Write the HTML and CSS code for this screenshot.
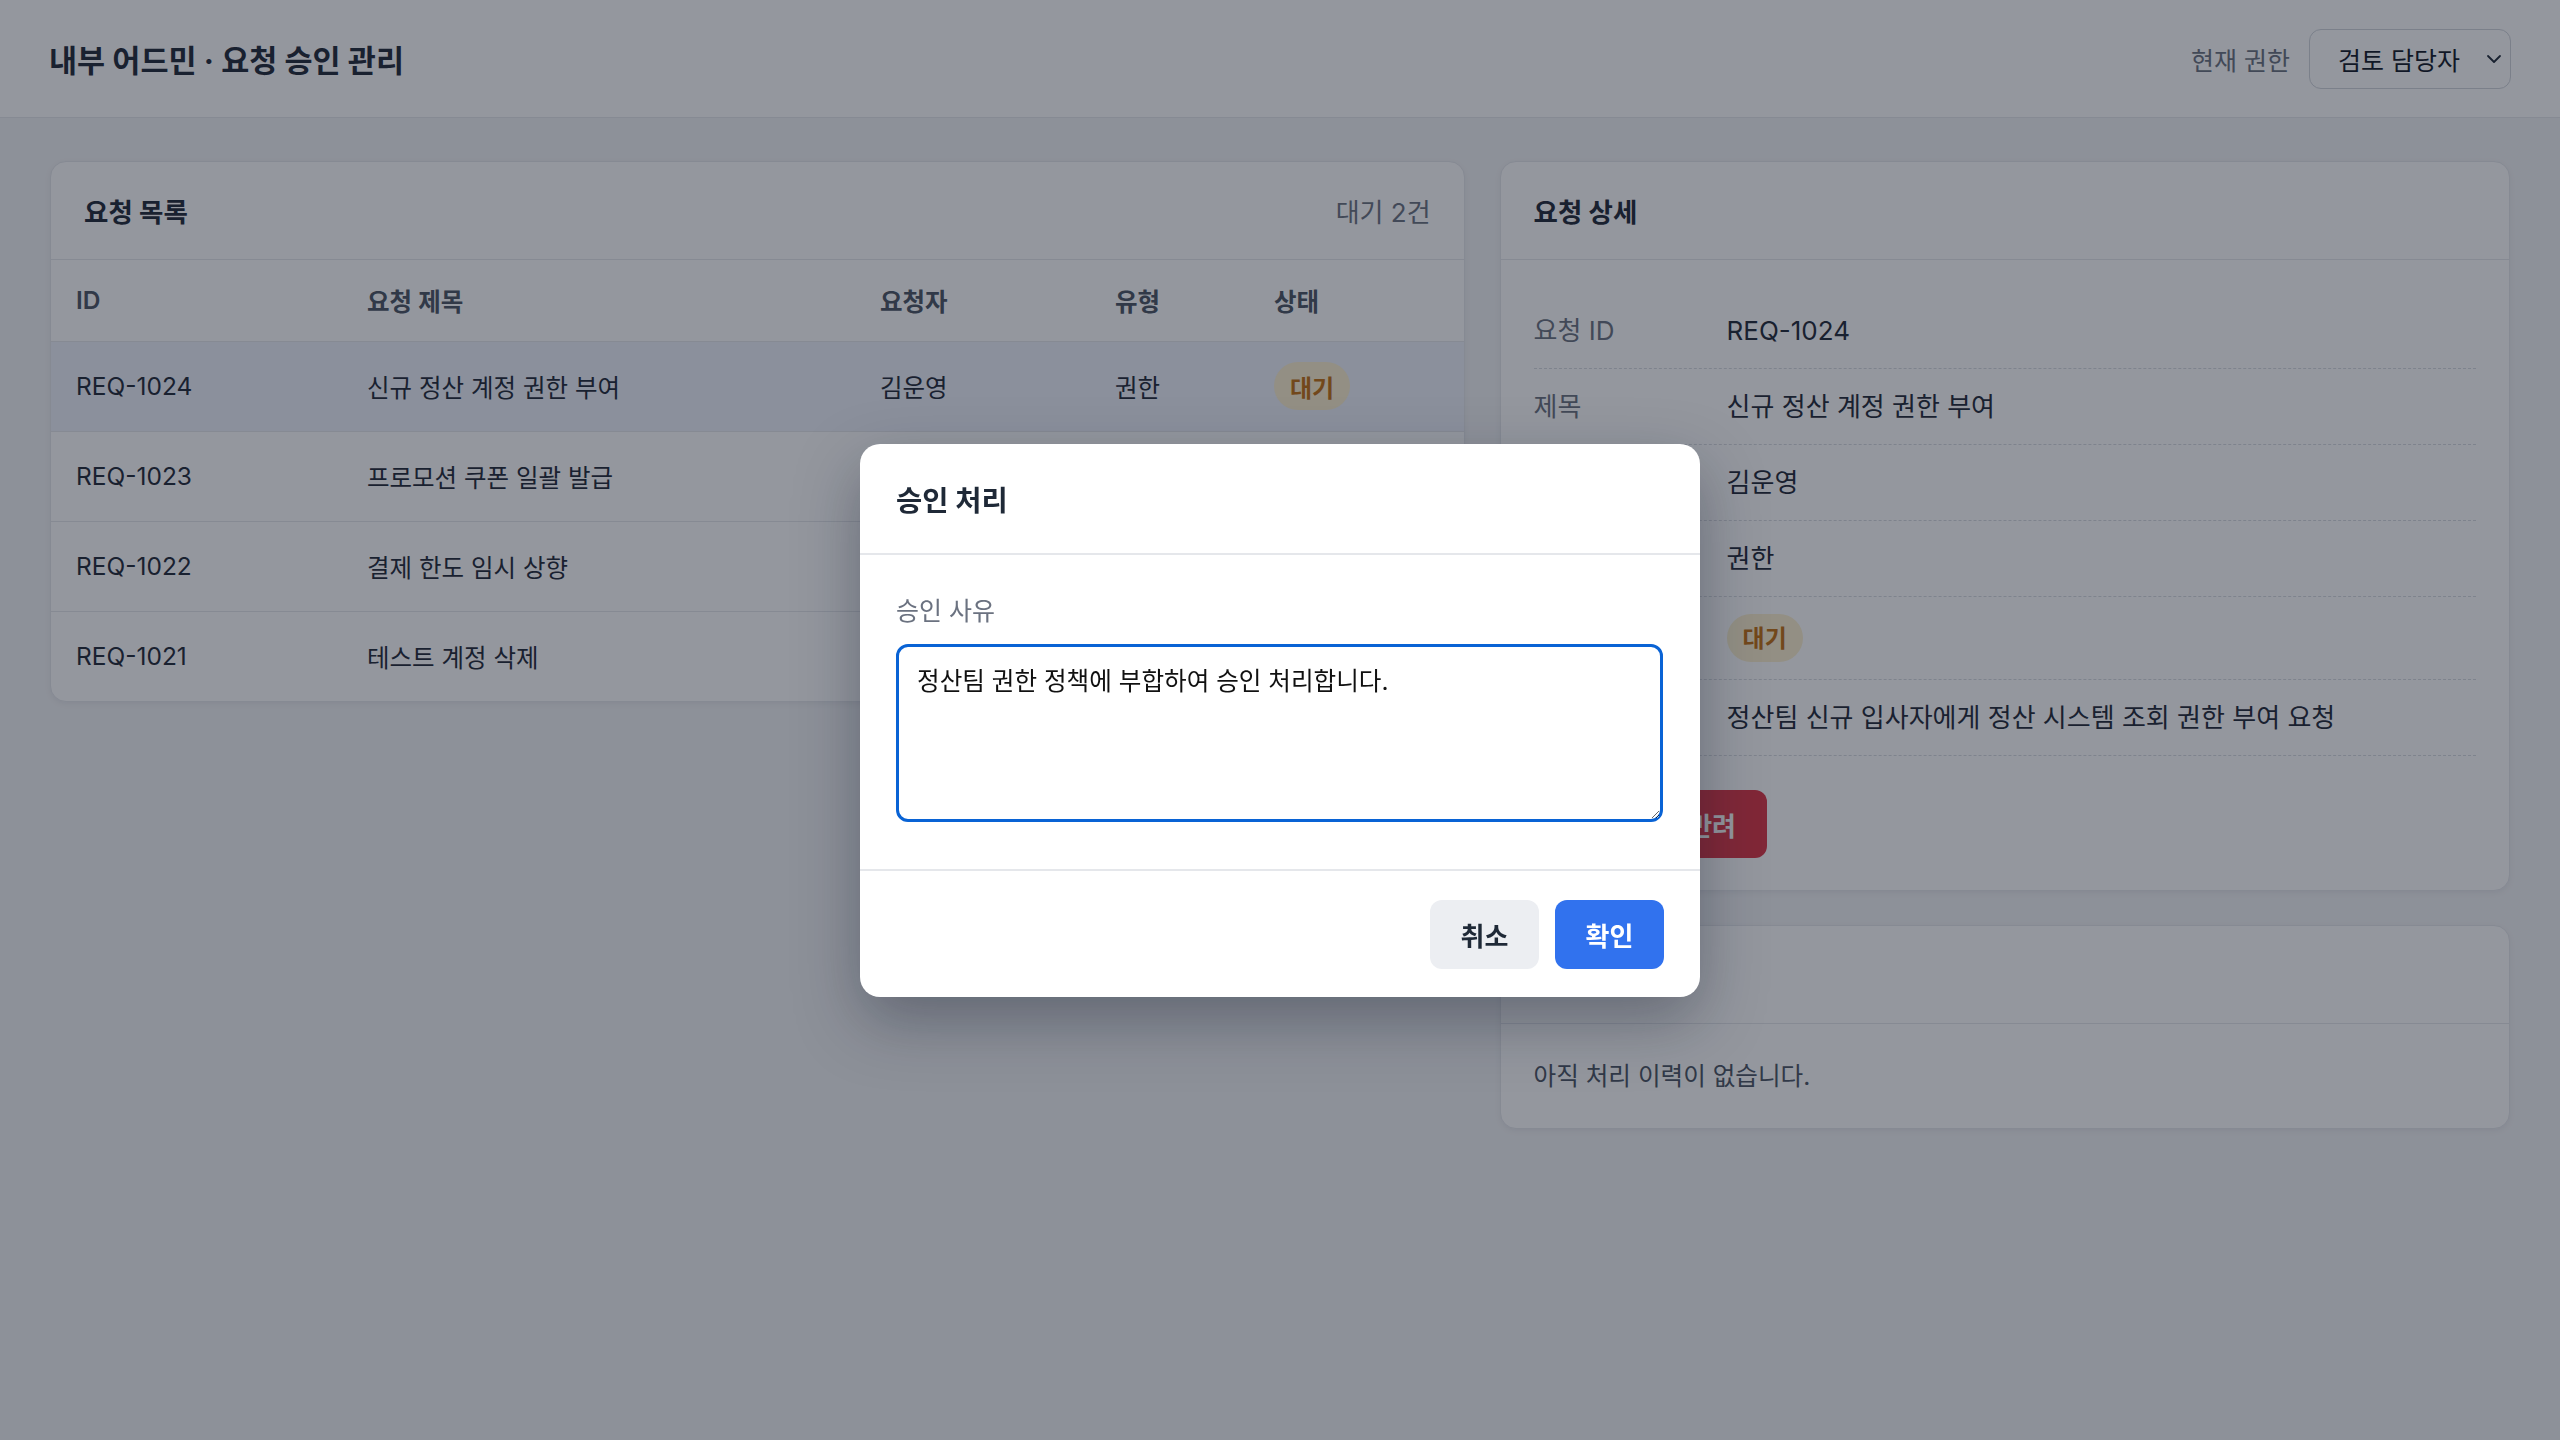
FILE: index.html
```html
<!DOCTYPE html>
<html lang="ko">
<head>
    <meta charset="UTF-8">
    <meta name="viewport" content="width=device-width, initial-scale=1.0">
    <title>요청 승인 관리</title>
    <link rel="stylesheet" href="styles.css">
</head>
<body>
    <header class="topbar">
        <h1 class="topbar-title">내부 어드민 · 요청 승인 관리</h1>
        <div class="role">
            <span class="role-label">현재 권한</span>
            <div class="role-select">
                <span>검토 담당자</span>
                <svg width="16" height="10" viewBox="0 0 16 10" fill="none" stroke="#1f2937" stroke-width="1.8" stroke-linecap="round" stroke-linejoin="round">
                    <path d="M2 2l6 6 6-6"/>
                </svg>
            </div>
        </div>
    </header>

    <main class="layout">
        <section class="panel">
            <div class="panel-head">
                <h2>요청 목록</h2>
                <span class="panel-meta">대기 2건</span>
            </div>
            <table class="req-table">
                <thead>
                    <tr>
                        <th class="col-id">ID</th>
                        <th class="col-title">요청 제목</th>
                        <th class="col-user">요청자</th>
                        <th class="col-type">유형</th>
                        <th class="col-status">상태</th>
                    </tr>
                </thead>
                <tbody>
                    <tr class="is-selected">
                        <td>REQ-1024</td>
                        <td>신규 정산 계정 권한 부여</td>
                        <td>김운영</td>
                        <td>권한</td>
                        <td><span class="badge badge-wait">대기</span></td>
                    </tr>
                    <tr>
                        <td>REQ-1023</td>
                        <td>프로모션 쿠폰 일괄 발급</td>
                        <td>박마케팅</td>
                        <td>쿠폰</td>
                        <td><span class="badge badge-wait">대기</span></td>
                    </tr>
                    <tr>
                        <td>REQ-1022</td>
                        <td>결제 한도 임시 상향</td>
                        <td>이재무</td>
                        <td>결제</td>
                        <td><span class="badge badge-done">승인</span></td>
                    </tr>
                    <tr>
                        <td>REQ-1021</td>
                        <td>테스트 계정 삭제</td>
                        <td>최개발</td>
                        <td>계정</td>
                        <td><span class="badge badge-reject">반려</span></td>
                    </tr>
                </tbody>
            </table>
        </section>

        <div class="side">
            <section class="panel">
                <div class="panel-head">
                    <h2>요청 상세</h2>
                </div>
                <div class="panel-body detail-body">
                    <dl class="detail">
                        <div class="detail-row"><dt>요청 ID</dt><dd>REQ-1024</dd></div>
                        <div class="detail-row"><dt>제목</dt><dd>신규 정산 계정 권한 부여</dd></div>
                        <div class="detail-row"><dt>요청자</dt><dd>김운영</dd></div>
                        <div class="detail-row"><dt>유형</dt><dd>권한</dd></div>
                        <div class="detail-row"><dt>상태</dt><dd><span class="badge badge-wait">대기</span></dd></div>
                        <div class="detail-row"><dt>내용</dt><dd>정산팀 신규 입사자에게 정산 시스템 조회 권한 부여 요청</dd></div>
                    </dl>
                    <div class="actions">
                        <button class="btn btn-primary">승인</button>
                        <button class="btn btn-danger">반려</button>
                    </div>
                </div>
            </section>

            <section class="panel">
                <div class="panel-head">
                    <h2>처리 이력</h2>
                </div>
                <div class="panel-body">
                    <p class="empty">아직 처리 이력이 없습니다.</p>
                </div>
            </section>
        </div>
    </main>

    <div class="overlay">
        <div class="modal">
            <div class="modal-head">
                <h3>승인 처리</h3>
            </div>
            <div class="modal-body">
                <label class="field-label" for="reason">승인 사유</label>
                <textarea id="reason" class="field-input">정산팀 권한 정책에 부합하여 승인 처리합니다.</textarea>
            </div>
            <div class="modal-foot">
                <button class="btn btn-light">취소</button>
                <button class="btn btn-primary">확인</button>
            </div>
        </div>
    </div>
</body>
</html>
```

FILE: styles.css
```css
* {
    box-sizing: border-box;
}
body {
    margin: 0;
    min-height: 100vh;
    font-family: 'Inter', 'Noto Sans CJK KR', sans-serif;
    font-size: 26px;
    color: #111827;
    background-color: #f3f4f6;
}
h1, h2, h3, p, dl, dd {
    margin: 0;
}

/* 상단 바 */
.topbar {
    display: flex;
    align-items: center;
    justify-content: space-between;
    height: 118px;
    padding: 0 49px;
    background-color: #fff;
    border-bottom: 1px solid #e5e7eb;
}
.topbar-title {
    font-size: 30.5px;
    font-weight: 700;
    color: #1f2937;
}
.role {
    display: flex;
    align-items: center;
    gap: 19px;
}
.role-label {
    font-size: 25px;
    color: #6b7280;
}
.role-select {
    display: flex;
    align-items: center;
    justify-content: space-between;
    width: 202px;
    height: 60px;
    padding: 0 8px 0 28px;
    border: 1px solid #d1d5db;
    border-radius: 12px;
    background-color: #fff;
    font-size: 25px;
    color: #111827;
}

/* 본문 레이아웃 */
.layout {
    display: grid;
    grid-template-columns: 1.4fr 1fr;
    gap: 35px;
    align-items: start;
    padding: 43px 50px;
}
.side {
    display: flex;
    flex-direction: column;
    gap: 34px;
}
.panel {
    background-color: #fff;
    border: 1px solid #e5e7eb;
    border-radius: 16px;
    box-shadow: 0 2px 6px rgba(15, 23, 42, 0.06);
    overflow: hidden;
}
.panel-head {
    display: flex;
    align-items: center;
    justify-content: space-between;
    height: 98px;
    padding: 0 33px;
    border-bottom: 1px solid #e5e7eb;
}
.panel-head h2 {
    font-size: 26.5px;
    font-weight: 700;
    color: #1f2937;
}
.panel-meta {
    font-size: 26px;
    color: #6b7280;
}
.panel-body {
    padding: 32px 33px;
}

/* 요청 테이블 */
.req-table {
    width: 100%;
    border-collapse: collapse;
    table-layout: fixed;
    font-size: 24.5px;
}
.req-table th,
.req-table td {
    text-align: left;
    padding: 0 25px;
    border-bottom: 1px solid #e5e7eb;
}
.req-table th {
    height: 81px;
    font-weight: 600;
    color: #4b5563;
}
.req-table td {
    height: 90px;
    color: #1f2937;
}
.req-table tbody tr:last-child td {
    border-bottom: none;
}
.req-table tr.is-selected td {
    background-color: #eef2fb;
}
.col-id { width: 291px; }
.col-title { width: 513px; }
.col-user { width: 235px; }
.col-type { width: 159px; }

.badge {
    display: inline-flex;
    align-items: center;
    height: 48px;
    padding: 0 16px;
    border-radius: 24px;
    font-size: 24px;
    font-weight: 600;
}
.badge-wait {
    background-color: #fdf1cf;
    color: #c27012;
}
.badge-done {
    background-color: #dcfce7;
    color: #15803d;
}
.badge-reject {
    background-color: #fee2e2;
    color: #b91c1c;
}

/* 상세 */
.detail-body {
    padding-top: 33px;
}
.detail-row {
    display: grid;
    grid-template-columns: 193px 1fr;
    align-items: center;
    padding: 17px 0;
    line-height: 41px;
    border-bottom: 1px dashed #d8dbe0;
}
.detail-row dt {
    color: #6b7280;
}
.detail-row dd {
    color: #1f2937;
}
.actions {
    display: flex;
    gap: 15px;
    margin-top: 34px;
}

.btn {
    min-width: 109px;
    height: 68px;
    padding: 0 28px;
    border: none;
    border-radius: 12px;
    font-family: inherit;
    font-size: 26px;
    font-weight: 700;
    cursor: pointer;
}
.btn-primary {
    background-color: #3172ee;
    color: #fff;
}
.btn-danger {
    background-color: #dc3545;
    color: #fff;
}
.btn-light {
    background-color: #eceef2;
    color: #1f2937;
}

.empty {
    font-size: 24.6px;
    line-height: 40px;
    color: #4b5563;
}

/* 모달 */
.overlay {
    position: fixed;
    inset: 0;
    display: flex;
    align-items: center;
    justify-content: center;
    background-color: rgba(17, 24, 39, 0.45);
}
.modal {
    width: 840px;
    background-color: #fff;
    border-radius: 20px;
    box-shadow: 0 24px 64px rgba(15, 23, 42, 0.35);
    overflow: hidden;
}
.modal-head {
    display: flex;
    align-items: center;
    height: 111px;
    padding: 0 36px;
    border-bottom: 2px solid #e5e7eb;
}
.modal-head h3 {
    font-size: 28.5px;
    font-weight: 700;
    color: #1f2937;
}
.modal-body {
    display: flex;
    flex-direction: column;
    padding: 38px 37px 47px 36px;
}
.field-label {
    font-size: 25px;
    line-height: 36px;
    color: #6b7280;
    margin-bottom: 15px;
}
.field-input {
    height: 178px;
    padding: 14px 18px;
    border: 3px solid #0963d5;
    border-radius: 12px;
    outline: none;
    font-family: inherit;
    font-size: 24.6px;
    line-height: 40px;
    color: #111;
}
.modal-foot {
    display: flex;
    justify-content: flex-end;
    gap: 16px;
    padding: 29px 36px 28px;
    border-top: 2px solid #e5e7eb;
}
.modal-foot .btn {
    height: 69px;
}
```
